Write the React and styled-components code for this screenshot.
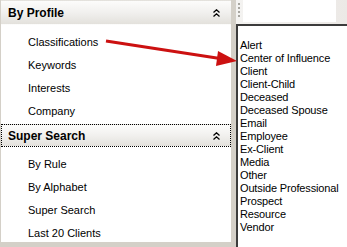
import styled, { createGlobalStyle } from "styled-components";

const GlobalStyle = createGlobalStyle`
  html, body {
    margin: 0;
    padding: 0;
    background: #d4d0c8;
    font-family: "Liberation Sans", Arial, sans-serif;
    font-size: 11px;
    color: #000;
  }
`;

const Screen = styled.div`
  position: relative;
  width: 347px;
  height: 247px;
  overflow: hidden;
  display: grid;
  grid-template-columns: 231px 5px 1fr;
  background: #d4d0c8;
`;

const NavPanel = styled.div`
  height: 242px;
  background: #fff;
  border-left: 1px solid #d4d0c8;
  display: flex;
  flex-direction: column;
  overflow: hidden;
`;

const SectionHeader = styled.div`
  height: ${(p) => p.$height}px;
  flex: none;
  box-sizing: border-box;
  margin: ${(p) => (p.$focused ? "1px 0 0" : "0")};
  display: flex;
  align-items: center;
  justify-content: space-between;
  padding: 0 10px 0 6px;
  background: linear-gradient(#fcfcfb, #f1f0ee 50%, #e3e1dc);
  border: 1px dotted ${(p) => (p.$focused ? "#000" : "transparent")};
  font-size: 12px;
  font-weight: bold;
`;

const ItemList = styled.div`
  display: flex;
  flex-direction: column;
  padding: ${(p) => p.$pad}px 0 0 27px;
  flex: none;
`;

const NavItem = styled.div`
  height: 23px;
  line-height: 23px;
  white-space: nowrap;
`;

const Splitter = styled.div`
  background: #d4d0c8;
`;

const RightPane = styled.div`
  display: flex;
  flex-direction: column;
`;

const Toolbar = styled.div`
  height: 24px;
  flex: none;
  display: flex;
  align-items: flex-start;
  gap: 1px;
  padding-left: 2px;
  background: linear-gradient(90deg, #f4f3f1, #ece9e6);
`;

const Grip = styled.div`
  display: flex;
  flex-direction: column;
  gap: 2px;
  padding-top: 3px;
  width: 4px;
`;

const GripDot = styled.span`
  width: 2px;
  height: 2px;
  background: #a8a6a0;
`;

const SearchBox = styled.div`
  width: 93px;
  height: 22px;
  background: #fff;
`;

const ListBox = styled.div`
  flex: 1;
  background: #fff;
  border-top: 2px solid #3c3c3c;
  border-left: 2px solid #3c3c3c;
  padding: 13px 0 0 2px;
`;

const ListItem = styled.div`
  height: 13px;
  line-height: 13px;
  white-space: nowrap;
  letter-spacing: -0.15px;
`;

const ArrowLayer = styled.svg`
  position: absolute;
  left: 0;
  top: 0;
  pointer-events: none;
`;

const Collapse = () => (
  <svg width="7" height="8" viewBox="0 0 7 8">
    <path d="M0.5 3.5 L3.5 0.8 L6.5 3.5 M0.5 7.5 L3.5 4.8 L6.5 7.5" fill="none" stroke="#000" strokeWidth="1.3" />
  </svg>
);

const profileItems = ["Classifications", "Keywords", "Interests", "Company"];
const searchItems = ["By Rule", "By Alphabet", "Super Search", "Last 20 Clients"];
const classes = [
  "Alert",
  "Center of Influence",
  "Client",
  "Client-Child",
  "Deceased",
  "Deceased Spouse",
  "Email",
  "Employee",
  "Ex-Client",
  "Media",
  "Other",
  "Outside Professional",
  "Prospect",
  "Resource",
  "Vendor",
];

export default function App() {
  return (
    <>
      <GlobalStyle />
      <Screen>
        <NavPanel>
          <SectionHeader $height={25}>
            <span>By Profile</span>
            <Collapse />
          </SectionHeader>
          <ItemList $pad={6}>
            {profileItems.map((t) => (
              <NavItem key={t}>{t}</NavItem>
            ))}
          </ItemList>
          <SectionHeader $height={23} $focused>
            <span>Super Search</span>
            <Collapse />
          </SectionHeader>
          <ItemList $pad={6}>
            {searchItems.map((t) => (
              <NavItem key={t}>{t}</NavItem>
            ))}
          </ItemList>
        </NavPanel>
        <Splitter />
        <RightPane>
          <Toolbar>
            <Grip>
              <GripDot />
              <GripDot />
              <GripDot />
              <GripDot />
            </Grip>
            <SearchBox />
          </Toolbar>
          <ListBox>
            {classes.map((c) => (
              <ListItem key={c}>{c}</ListItem>
            ))}
          </ListBox>
        </RightPane>
        <ArrowLayer width="347" height="247">
          <line x1="106" y1="41" x2="220" y2="58.5" stroke="#cc1111" strokeWidth="3" />
          <polygon points="237,61 218,51 216,66" fill="#cc1111" />
        </ArrowLayer>
      </Screen>
    </>
  );
}
